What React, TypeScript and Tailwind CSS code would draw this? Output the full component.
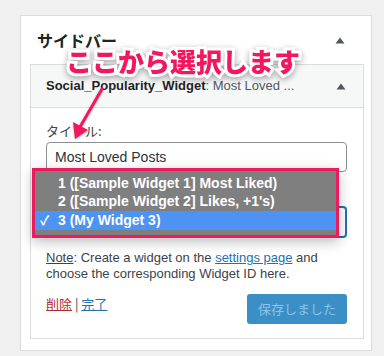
import React from 'react'

const font = "font-['Liberation_Sans','Noto_Sans_CJK_JP',sans-serif]"
const jp = "font-['Noto_Sans_CJK_JP','Liberation_Sans',sans-serif]"

const Caret = () => (
  <svg width="10" height="7" viewBox="0 0 10 7" className="text-[#50575e]">
    <path d="M5 0.5 L9.5 6.5 L0.5 6.5 Z" fill="currentColor" />
  </svg>
)

const options = [
  { label: "1 ([Sample Widget 1] Most Liked)", selected: false },
  { label: "2 ([Sample Widget 2] Likes, +1's)", selected: false },
  { label: "3 (My Widget 3)", selected: true },
]

export default function App() {
  return (
    <div className={`relative w-[384px] h-[356px] overflow-hidden bg-[#f0f0f1] pl-5 pt-[15px] ${font}`}>
      {/* sidebar panel */}
      <div className="w-[352px] bg-white border border-[#dcdcde] pb-[11px]">
        <div className="flex items-center justify-between h-12 pl-4 pr-[26px]">
          <h2 className={`text-[16px] font-bold text-[#1d2327] ${jp}`}>サイドバー</h2>
          <Caret />
        </div>

        {/* widget */}
        <div className="ml-[9px] w-[334px] border border-[#dcdcde]">
          <div className="flex items-center justify-between h-[43px] bg-[#f6f7f7] border-b border-[#dcdcde] pl-[15px] pr-[17px]">
            <h3 className="text-[13px] font-semibold text-[#1d2327] whitespace-nowrap">
              Social_Popularity_Widget<span className="font-normal text-[#50575e]">: Most Loved ...</span>
            </h3>
            <Caret />
          </div>

          <div className="pl-[15px] pr-[16px] pt-[14px] pb-[14px]">
            <label className={`block text-[13px] leading-[18px] text-[#3c434a] mb-[2px] ${jp}`}>タイトル:</label>
            <div className="h-[30px] border border-[#8c8f94] rounded-[4px] flex items-center px-[8px] text-[14px] text-[#2c3338]">
              Most Loved Posts
            </div>

            <label className="block text-[13px] leading-[18px] text-[#3c434a] mt-[12px] mb-[4px]">Widget ID:</label>
            <div className="h-[32px] border-2 border-[#2271b1] rounded-[4px] flex items-center px-[8px] text-[14px] text-[#2c3338]">
              3 (My Widget 3)
            </div>

            <p className="mt-[12px] text-[13px] leading-[16px] text-[#3c434a]">
              <span className="underline">Note</span>: Create a widget on the{' '}
              <a className="text-[#2271b1] underline">settings page</a> and choose the corresponding Widget ID here.
            </p>

            <div className="mt-[12px] flex items-start justify-between">
              <div className={`pt-[2px] text-[13px] leading-[16px] text-[#3c434a] ${jp}`}>
                <a className="text-[#b32d2e] underline">削除</a> | <a className="text-[#2271b1] underline">完了</a>
              </div>
              <button className={`w-[100px] h-[30px] rounded-[3px] bg-[#3a8fc6] text-[#8cc3e8] text-[13px] ${jp}`}>
                保存しました
              </button>
            </div>
          </div>
        </div>
      </div>

      {/* open dropdown menu */}
      <div className="absolute left-[32px] top-[168px] w-[307px] h-[70px] border-[3px] border-[#ee1a5e] shadow-[0_4px_12px_rgba(0,0,0,0.25)]">
        <div className="h-full bg-[#7f7f7f] pt-[3px]">
          {options.map((o) => (
            <div
              key={o.label}
              className={`flex items-center h-[18.5px] text-[14px] font-semibold text-white ${o.selected ? 'bg-[#4c93f3]' : ''}`}
            >
              <span className="w-[23px] pl-[5px] text-[13px]">{o.selected ? '✓' : ''}</span>
              <span className="whitespace-nowrap">{o.label}</span>
            </div>
          ))}
        </div>
      </div>

      {/* annotation */}
      <div
        className={`absolute left-[66px] top-[44px] text-[26px] leading-[34px] font-black text-[#f2175f] whitespace-nowrap [-webkit-text-stroke:6px_white] [paint-order:stroke_fill] [filter:drop-shadow(0_2px_3px_rgba(0,0,0,0.35))] ${jp}`}
      >
        ここから選択します
      </div>
      <svg
        className="absolute left-0 top-0 pointer-events-none [filter:drop-shadow(0_1px_1px_rgba(0,0,0,0.3))]"
        width="384"
        height="356"
      >
        <line x1="102" y1="89" x2="80" y2="127" stroke="#f2175f" strokeWidth="3" strokeLinecap="round" />
        <polygon points="75,139 73,122 88,130" fill="#f2175f" />
      </svg>
    </div>
  )
}
